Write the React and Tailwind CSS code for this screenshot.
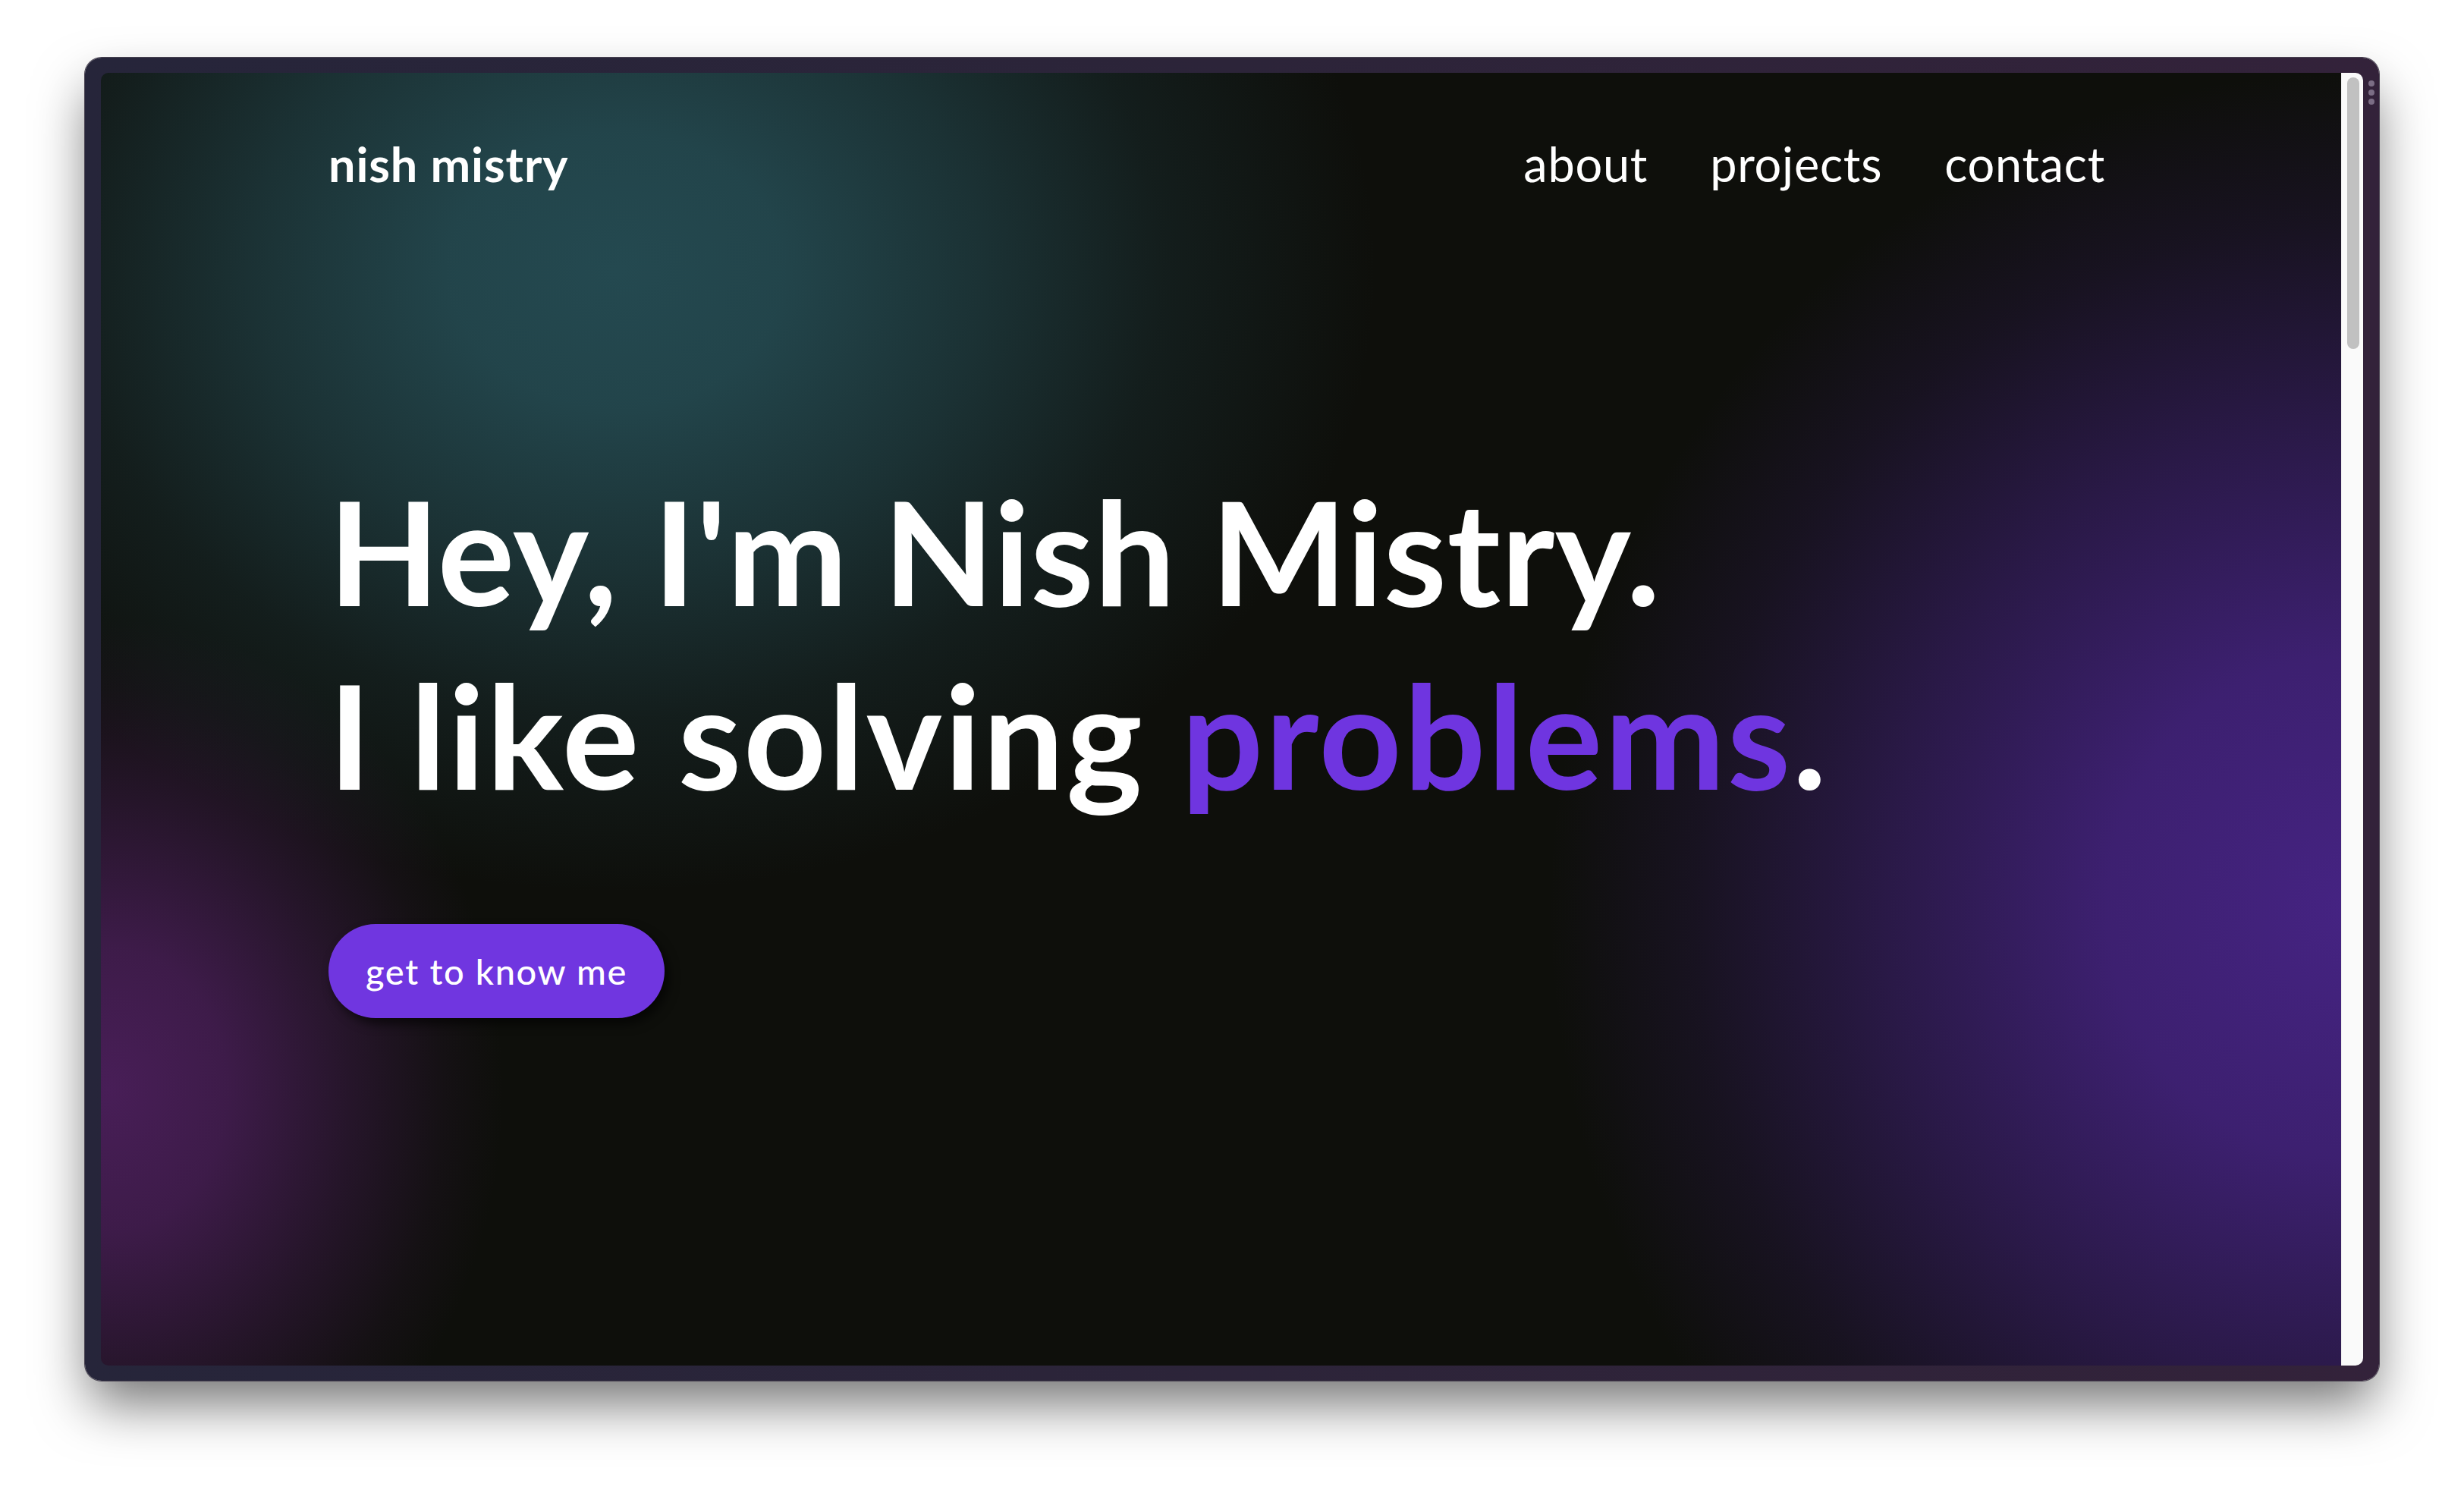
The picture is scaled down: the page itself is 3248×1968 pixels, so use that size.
export default function App() {
  return (
    <div className="w-[3248px] h-[1968px] bg-white pl-[112px] pt-[76px] font-['Lato',sans-serif]">
      <div className="relative flex w-[3024px] h-[1744px] rounded-[22px] bg-[linear-gradient(90deg,#26253a,#2c2439_50%,#33223a)] pt-[20px] pb-[20px] px-[21px] ring-1 ring-[#4a4452] shadow-[0_36px_70px_-6px_rgba(0,0,0,0.55)]">
        <main className="flex flex-col flex-1 h-full overflow-hidden rounded-l-[10px] bg-[#0e0f0b] bg-[image:radial-gradient(ellipse_1000px_820px_at_680px_260px,rgba(36,73,80,1)_0%,rgba(36,73,80,0.92)_22%,rgba(36,73,80,0.6)_48%,rgba(36,73,80,0.25)_72%,rgba(36,73,80,0)_100%),radial-gradient(ellipse_520px_620px_at_10px_1340px,rgba(72,30,87,1)_0%,rgba(72,30,87,0.82)_30%,rgba(72,30,87,0.4)_62%,rgba(72,30,87,0.12)_85%,rgba(72,30,87,0)_100%),radial-gradient(ellipse_1050px_1100px_at_2960px_1100px,rgba(69,35,130,1)_0%,rgba(69,35,130,0.85)_30%,rgba(69,35,130,0.5)_58%,rgba(69,35,130,0.18)_82%,rgba(69,35,130,0)_100%)] pl-[300px] pr-[311px] pt-[88px] text-white">
          <nav className="flex items-start justify-between text-[63px] leading-[63px]">
            <a className="font-bold tracking-[0.014em]">nish mistry</a>
            <div className="flex gap-[82px] font-normal tracking-[0.012em]">
              <a>about</a>
              <a>projects</a>
              <a>contact</a>
            </div>
          </nav>
          <h1 className="mt-[357px] text-[190px] leading-[242px] font-bold">
            <span className="block tracking-[0.002em]">Hey, I'm Nish Mistry.</span>
            <span className="block tracking-[0.014em]">
              I like solving <span className="text-[#6f35e0]">problems</span>.
            </span>
          </h1>
          <div className="mt-[130px]">
            <button className="flex items-center justify-center w-[443px] h-[124px] rounded-full bg-[#7036e0] text-[47px] leading-[56px] font-medium tracking-[0.035em] text-white shadow-[6px_8px_14px_rgba(0,0,0,0.6)]">
              get to know me
            </button>
          </div>
        </main>
        <div className="w-[29px] h-full rounded-r-[10px] bg-[#fafafa] border-l border-[#ededed] pt-[6px] pl-[7px]">
          <div className="w-[16px] h-[358px] rounded-full bg-[#c1c1c1]" />
        </div>
        <div className="absolute right-[6px] top-[30px] flex flex-col gap-[4px]">
          <div className="w-[8px] h-[8px] rounded-full bg-[#7b6d85]" />
          <div className="w-[8px] h-[8px] rounded-full bg-[#7b6d85]" />
          <div className="w-[8px] h-[8px] rounded-full bg-[#7b6d85]" />
        </div>
      </div>
    </div>
  );
}
